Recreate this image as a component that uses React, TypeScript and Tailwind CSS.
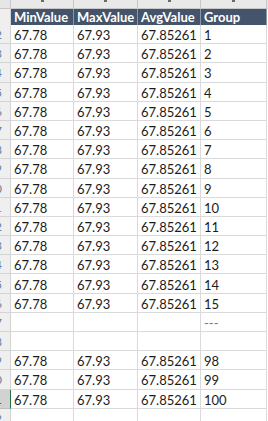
const ROWS: { min: string; max: string; avg: string; group: string }[] = [
  ...Array.from({ length: 15 }, (_, i) => ({
    min: "67.78",
    max: "67.93",
    avg: "67.85261",
    group: String(i + 1),
  })),
  { min: "", max: "", avg: "", group: "---" },
  { min: "", max: "", avg: "", group: "" },
  { min: "67.78", max: "67.93", avg: "67.85261", group: "98" },
  { min: "67.78", max: "67.93", avg: "67.85261", group: "99" },
  { min: "67.78", max: "67.93", avg: "67.85261", group: "100" },
  { min: "", max: "", avg: "", group: "" },
];

const COLS = "grid grid-cols-[11px_63px_64px_63px_66px_1px]";

function RowHead({ n, selected }: { n: number; selected?: boolean }) {
  return (
    <div
      className={`flex items-center justify-end overflow-hidden border-b border-r pr-[8px] pt-[2px] text-[12px] ${
        selected
          ? "border-r-[#217346] border-b-[#bdbdbd] bg-[#d2d2d2] text-[#333]"
          : "border-[#d4d4d4] bg-[#efefef] text-[#6b7f99]"
      }`}
    >
      {n}
    </div>
  );
}

function Cell({ children, muted }: { children?: string; muted?: boolean }) {
  return (
    <div
      className={`flex items-center overflow-hidden whitespace-nowrap border-b border-r border-[#dadada] pl-[3px] pt-[3px] ${
        muted ? "text-[#7a7a7a]" : "text-[#1c1c1c]"
      }`}
    >
      {children}
    </div>
  );
}

export default function App() {
  return (
    <div
      className="h-[421px] w-[268px] overflow-hidden bg-white text-[13px] leading-none"
      style={{ fontFamily: "Lato, 'Noto Sans', sans-serif" }}
    >
      {/* column letters strip, mostly scrolled away */}
      <div className={`${COLS} h-[9px]`}>
        <div className="border-b border-r border-[#c8c8c8] bg-[#e6e6e6]" />
        {[0, 1, 2, 3].map((i) => (
          <div
            key={i}
            className="flex justify-center border-b border-r border-[#c8c8c8] bg-[#e9e9e9]"
          >
            <span className="h-[2px] w-[3px] bg-[#6a6a6a]" />
          </div>
        ))}
        <div className="border-b border-[#c8c8c8] bg-[#e9e9e9]" />
      </div>

      {/* table header */}
      <div className={`${COLS} h-[16px]`}>
        <div className="border-r border-[#d4d4d4] bg-[#efefef]" />
        {["MinValue", "MaxValue", "AvgValue", "Group"].map((h) => (
          <div
            key={h}
            className="flex items-center border-r border-[#8a97a8] bg-[#44546a] pl-[3px] pt-[1px] font-bold text-white"
          >
            {h}
          </div>
        ))}
        <div className="bg-white" />
      </div>

      {ROWS.map((r, i) => (
        <div key={i} className={`${COLS} h-[19.2px]`}>
          <RowHead n={i + 2} selected={i === 19} />
          <Cell>{r.min}</Cell>
          <Cell>{r.max}</Cell>
          <Cell>{r.avg}</Cell>
          <Cell muted={r.group === "---"}>{r.group}</Cell>
          <div className="bg-white" />
        </div>
      ))}
    </div>
  );
}
